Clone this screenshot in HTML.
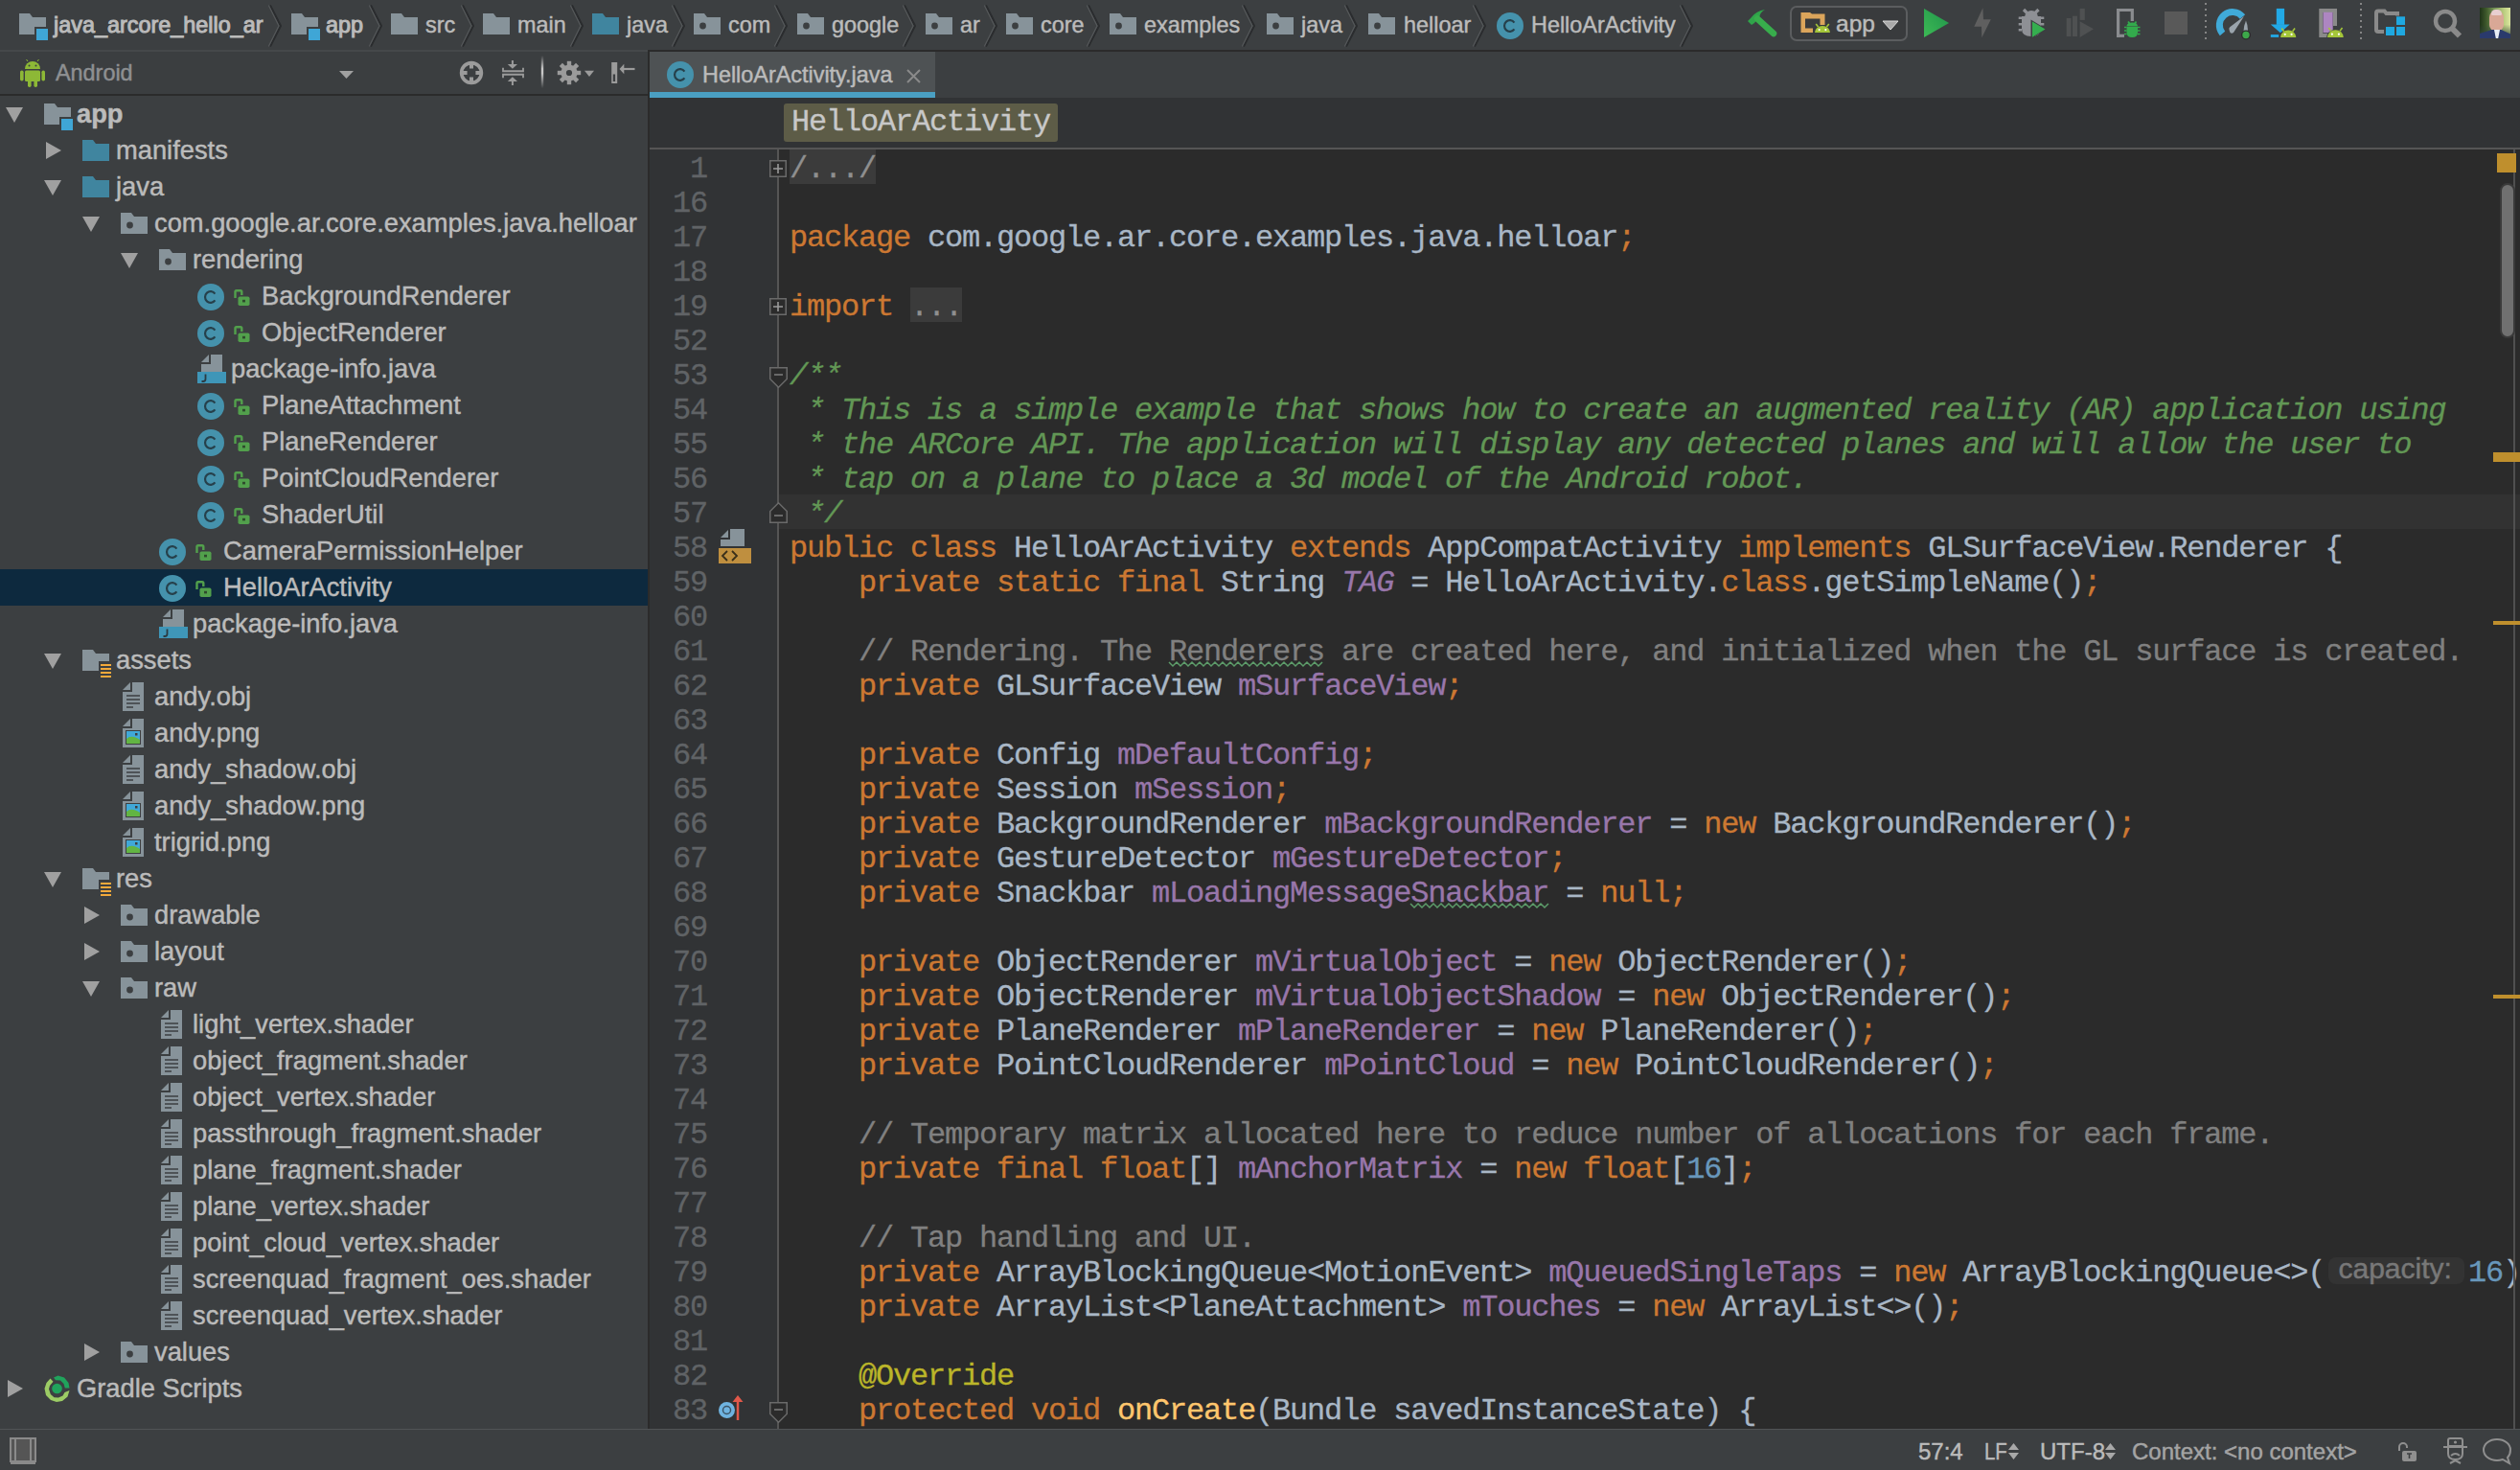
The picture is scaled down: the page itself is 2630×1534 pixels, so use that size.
<!DOCTYPE html><html><head><meta charset="utf-8"><style>
*{box-sizing:border-box}
html,body{margin:0;padding:0;width:2630px;height:1534px;overflow:hidden;background:#3c3f41;font-family:"Liberation Sans",sans-serif;}
.a{position:absolute}
.t{position:absolute;white-space:pre;color:#bbbbbb;line-height:1;-webkit-text-stroke:0.45px currentColor}
svg{position:absolute;overflow:visible}
.code{position:absolute;white-space:pre;font-family:"Liberation Mono",monospace;font-size:32px;letter-spacing:-1.2px;line-height:36px;color:#a9b7c6;margin-top:3px;-webkit-text-stroke:0.3px currentColor}
.k{color:#cc7832}.f{color:#9876aa}.n{color:#6897bb}.c{color:#808080}.d{color:#629755;font-style:italic}.an{color:#bbb529}.m{color:#ffc66d}
.ln{position:absolute;left:680px;width:58px;text-align:right;font-family:"Liberation Mono",monospace;font-size:32px;letter-spacing:-1.2px;line-height:36px;color:#606366;white-space:pre;margin-top:3px;-webkit-text-stroke:0.3px currentColor}
</style></head><body>
<svg width="0" height="0" style="position:absolute">
<defs>
<symbol id="fold" viewBox="0 0 28 22"><path d="M0 0H11L14 4H28V22H0Z" fill="#87939a"/></symbol>
<symbol id="pkg" viewBox="0 0 28 22"><path d="M0 0H11L14 4H28V22H0Z" fill="#87939a"/><circle cx="9.5" cy="13" r="3.4" fill="#3c3f41"/></symbol>
<symbol id="srcf" viewBox="0 0 28 22"><path d="M0 0H11L14 4H28V22H0Z" fill="#40859f"/></symbol>
<symbol id="mod" viewBox="0 0 30 28"><path d="M0 0H11L14 4H28V22H0Z" fill="#87939a"/><rect x="16" y="14" width="14" height="14" fill="#3c3f41"/><rect x="18" y="16" width="12" height="12" fill="#3fa6d6"/></symbol>
<symbol id="cls" viewBox="0 0 28 28"><circle cx="14" cy="14" r="14" fill="#4592ac"/><path d="M18.4 10.6A5.7 5.9 0 1 0 18.4 17.4" fill="none" stroke="#26404b" stroke-width="2.2"/></symbol>
<symbol id="lock" viewBox="0 0 17 17"><path d="M1.5 9V2.5Q1.5 1.2 2.8 1.2H7Q8.3 1.2 8.3 2.5V6" fill="none" stroke="#52a04c" stroke-width="2.4"/><rect x="4.5" y="7.5" width="12" height="9.5" rx="1.8" fill="#52a04c"/><rect x="9" y="10.8" width="3" height="2.6" fill="#2f4a2d"/></symbol>
<symbol id="file" viewBox="0 0 22 30"><path d="M0 8L8 0V8Z" fill="#87939a"/><path d="M10 0H22V30H0V10H10Z" fill="#87939a"/><path d="M4 14H18M4 18H18M4 22H18M4 26H11" stroke="#3c3f41" stroke-width="1.6"/></symbol>
<symbol id="img" viewBox="0 0 22 30"><path d="M0 8L8 0V8Z" fill="#87939a"/><path d="M10 0H22V30H0V10H10Z" fill="#87939a"/><rect x="3" y="12" width="16" height="15" fill="#3c3f41"/><rect x="4" y="13" width="14" height="13" fill="#40a8d8"/><path d="M4 26V21Q9 16 18 22V26Z" fill="#62b543"/><rect x="13" y="15" width="2.5" height="2.5" fill="#3c3f41"/></symbol>
<symbol id="jfile" viewBox="0 0 30 30"><path d="M4 8L12 0V8Z" fill="#87939a"/><path d="M14 0H26V18H4V10H14Z" fill="#87939a"/><rect x="0" y="18" width="30" height="12" fill="#3f96b8"/><path d="M8.5 20.5V25.5Q8.5 28 6 28H4.5" fill="none" stroke="#2b3a42" stroke-width="1.8"/></symbol>
<symbol id="resf" viewBox="0 0 30 30"><path d="M0 0H11L14 4H28V22H0Z" fill="#87939a"/><rect x="17" y="12" width="14" height="18" fill="#3c3f41"/><path d="M19 16H30M19 20H30M19 24H30M19 28H30" stroke="#f2a93b" stroke-width="2"/></symbol>
<symbol id="tri_d" viewBox="0 0 18 16"><path d="M0 0H18L9 16Z" fill="#a0a0a0"/></symbol>
<symbol id="tri_r" viewBox="0 0 16 18"><path d="M0 0L16 9L0 18Z" fill="#a0a0a0"/></symbol>
<symbol id="chev" viewBox="0 0 14 44"><path d="M2 0.5L13 22L2 43.5" fill="none" stroke="#2a2c2e" stroke-width="2"/><path d="M0.3 0.5L11 22L0.3 43.5" fill="none" stroke="#55585a" stroke-width="1.2"/></symbol>
<symbol id="droid" viewBox="0 0 26 30"><path d="M5 11A8 8 0 0 1 21 11Z" fill="#8db836"/><rect x="5" y="12.5" width="16" height="11.5" rx="1.5" fill="#8db836"/><rect x="0" y="12.5" width="3.6" height="11" rx="1.8" fill="#8db836"/><rect x="22.4" y="12.5" width="3.6" height="11" rx="1.8" fill="#8db836"/><rect x="8" y="22" width="3.6" height="8" rx="1.8" fill="#8db836"/><rect x="14.4" y="22" width="3.6" height="8" rx="1.8" fill="#8db836"/><path d="M8 3L6.5 1M18 3L19.5 1" stroke="#8db836" stroke-width="1"/><circle cx="9.5" cy="7.5" r="1" fill="#3c3f41"/><circle cx="16.5" cy="7.5" r="1" fill="#3c3f41"/></symbol>
</defs></svg>

<div class="a" style="left:0;top:0;width:2630px;height:52px;background:#3c3f41"></div>
<svg style="left:20px;top:14px" width="30" height="28"><use href="#mod"/></svg>
<div class="t" style="left:56px;top:15px;font-size:23.4px;-webkit-text-stroke:1px currentColor">java_arcore_hello_ar</div>
<svg style="left:280px;top:4.5px" width="14" height="44"><use href="#chev"/></svg>
<svg style="left:304px;top:14px" width="30" height="28"><use href="#mod"/></svg>
<div class="t" style="left:340px;top:15px;font-size:23.4px;-webkit-text-stroke:1px currentColor">app</div>
<svg style="left:385px;top:4.5px" width="14" height="44"><use href="#chev"/></svg>
<svg style="left:408px;top:14px" width="28" height="22"><use href="#fold"/></svg>
<div class="t" style="left:444px;top:15px;font-size:23.4px">src</div>
<svg style="left:481px;top:4.5px" width="14" height="44"><use href="#chev"/></svg>
<svg style="left:504px;top:14px" width="28" height="22"><use href="#fold"/></svg>
<div class="t" style="left:540px;top:15px;font-size:23.4px">main</div>
<svg style="left:595px;top:4.5px" width="14" height="44"><use href="#chev"/></svg>
<svg style="left:618px;top:14px" width="28" height="22"><use href="#srcf"/></svg>
<div class="t" style="left:654px;top:15px;font-size:23.4px">java</div>
<svg style="left:701px;top:4.5px" width="14" height="44"><use href="#chev"/></svg>
<svg style="left:724px;top:14px" width="28" height="22"><use href="#pkg"/></svg>
<div class="t" style="left:760px;top:15px;font-size:23.4px">com</div>
<svg style="left:808px;top:4.5px" width="14" height="44"><use href="#chev"/></svg>
<svg style="left:832px;top:14px" width="28" height="22"><use href="#pkg"/></svg>
<div class="t" style="left:868px;top:15px;font-size:23.4px">google</div>
<svg style="left:942px;top:4.5px" width="14" height="44"><use href="#chev"/></svg>
<svg style="left:966px;top:14px" width="28" height="22"><use href="#pkg"/></svg>
<div class="t" style="left:1002px;top:15px;font-size:23.4px">ar</div>
<svg style="left:1027px;top:4.5px" width="14" height="44"><use href="#chev"/></svg>
<svg style="left:1050px;top:14px" width="28" height="22"><use href="#pkg"/></svg>
<div class="t" style="left:1086px;top:15px;font-size:23.4px">core</div>
<svg style="left:1134px;top:4.5px" width="14" height="44"><use href="#chev"/></svg>
<svg style="left:1158px;top:14px" width="28" height="22"><use href="#pkg"/></svg>
<div class="t" style="left:1194px;top:15px;font-size:23.4px">examples</div>
<svg style="left:1296px;top:4.5px" width="14" height="44"><use href="#chev"/></svg>
<svg style="left:1322px;top:14px" width="28" height="22"><use href="#pkg"/></svg>
<div class="t" style="left:1358px;top:15px;font-size:23.4px">java</div>
<svg style="left:1403px;top:4.5px" width="14" height="44"><use href="#chev"/></svg>
<svg style="left:1428px;top:14px" width="28" height="22"><use href="#pkg"/></svg>
<div class="t" style="left:1465px;top:15px;font-size:23.4px">helloar</div>
<svg style="left:1537px;top:4.5px" width="14" height="44"><use href="#chev"/></svg>
<svg style="left:1562px;top:13px" width="28" height="28"><use href="#cls"/></svg>
<div class="t" style="left:1598px;top:15px;font-size:23.4px">HelloArActivity</div>
<svg style="left:1753px;top:4.5px" width="14" height="44"><use href="#chev"/></svg>
<svg style="left:1823px;top:9px" width="32" height="30" viewBox="0 0 32 30"><path d="M1 13L4.5 9.5Q10 2 19 1Q14 4 13.5 8L8 15L5 17Z" fill="#2fa44a"/><path d="M11 10.5L28 26" stroke="#38ad4c" stroke-width="6.5" stroke-linecap="round"/></svg>
<div class="a" style="left:1868px;top:6px;width:123px;height:37px;border:2.5px solid #5b5d5f;border-radius:7px;background:#393b3d"></div>
<svg style="left:1879px;top:12px" width="32" height="23" viewBox="0 0 32 23"><path d="M0.5 1H10L12 2.5H25.5V14H20.5V7.5H5V17.5H13V22H0.5Z" fill="#dba55b"/><path d="M14 22.5A9.0 8.02 0 0 1 32 22.5Z" fill="#393b3d"/><path d="M15 22A8.0 7.0200000000000005 0 0 1 31 22Z" fill="#a4c639"/><path d="M18.6 16.033L16.2 13M27.4 16.033L29.8 13" stroke="#a4c639" stroke-width="1.6"/><circle cx="19.64" cy="19.0516" r="1.1" fill="#fff"/><circle cx="26.36" cy="19.0516" r="1.1" fill="#fff"/></svg>
<div class="t" style="left:1916px;top:13px;font-size:24.5px;color:#bbbbbb">app</div>
<svg style="left:1964px;top:21px" width="18" height="11" viewBox="0 0 18 11"><path d="M1 1H17L9 10Z" fill="#a9a9a9" stroke="#d8d8d8" stroke-width="1"/></svg>
<svg style="left:2008px;top:9px" width="26" height="30" viewBox="0 0 26 30"><defs><linearGradient id="rg" x1="0" y1="1" x2="1" y2="0"><stop offset="0" stop-color="#3dba55"/><stop offset="1" stop-color="#1f934a"/></linearGradient></defs><path d="M0 0L26 15L0 30Z" fill="url(#rg)"/></svg>
<svg style="left:2060px;top:8px" width="18" height="32" viewBox="0 0 18 32"><path d="M9.4 0.3L0.3 19.8H8L8.3 31.3L17.8 12.2H10Z" fill="#5f5f5f"/></svg>
<svg style="left:2106px;top:8px" width="30" height="33" viewBox="0 0 30 33"><path d="M6 2L9.5 5.5M21.5 2L18 5.5" stroke="#8e9095" stroke-width="3.2"/><path d="M7 10A7 7 0 0 1 21 10Z" fill="#8e9095"/><path d="M4 9H24V22Q24 30 14 30Q4 30 4 22Z" fill="#8e9095"/><path d="M0.7 9.5H4V12H0.7ZM0.7 16H4V18.5H0.7ZM0.7 22H4V24.5H0.7ZM24 9.5H27.3V12H24ZM24 16H27.3V18.5H24Z" fill="#8e9095"/><path d="M13.5 12.5L30 22.5L13.5 32.5Z" fill="#3c3f41"/><path d="M15 14.5L28.5 22.5L15 30.8Z" fill="#35ae4f"/></svg>
<svg style="left:2156px;top:8px" width="30" height="32" viewBox="0 0 30 32"><rect x="0.7" y="11" width="4.8" height="19" fill="#4f5152"/><rect x="7" y="8.7" width="5" height="21.3" fill="#4f5152"/><rect x="14.6" y="0.9" width="5.2" height="12" fill="#4f5152"/><path d="M14.6 14.2L29 22.2L14.6 30.9Z" fill="#4f5152"/></svg>
<svg style="left:2208px;top:8px" width="27" height="32" viewBox="0 0 27 32"><path d="M2.6 30.9V2.5H17.3V14" fill="none" stroke="#8a8c8f" stroke-width="3.2"/><path d="M2.6 29.3H9" stroke="#8a8c8f" stroke-width="3.2"/><path d="M13 14.5L14.5 16.5M21.5 14.5L20 16.5" stroke="#33ab4c" stroke-width="1.8"/><path d="M11.5 19A5.8 4 0 0 1 23 19Z" fill="#33ab4c"/><path d="M11.5 19.5H23V26Q23 31 17.25 31Q11.5 31 11.5 26Z" fill="#33ab4c"/><path d="M9 20.5H11.5M9 24H11.5M9 27.5H11.5M23 20.5H25.5M23 24H25.5M23 27.5H25.5" stroke="#33ab4c" stroke-width="1.6"/></svg>
<div class="a" style="left:2259px;top:12px;width:24px;height:24px;background:#595959"></div>
<div class="a" style="left:2301px;top:3px;width:2px;height:39px;background:repeating-linear-gradient(#858585 0 2px,transparent 2px 6px)"></div>
<div class="a" style="left:2463px;top:3px;width:2px;height:39px;background:repeating-linear-gradient(#858585 0 2px,transparent 2px 6px)"></div>
<svg style="left:2315px;top:12px" width="36" height="30" viewBox="0 0 36 30"><path d="M4.5 23A12.5 12.5 0 0 1 25.5 5.5" fill="none" stroke="#40aad8" stroke-width="7"/><path d="M11.5 19Q11 17 12.5 16L27 5L16 22Q14 23.5 12.5 22Z" fill="#9aa4ac"/><path d="M29 9.5Q31 14 31 20Q31 24 28.5 24Q26.5 24 26.5 21Q26.5 15 29 9.5Z" fill="#9aa4ac"/><circle cx="29" cy="24.5" r="5" fill="#2b2b2b"/><circle cx="29" cy="24.5" r="3.7" fill="#3da84a"/></svg>
<svg style="left:2369px;top:8px" width="28" height="32" viewBox="0 0 28 32"><rect x="6.8" y="0.9" width="8.3" height="17" fill="#22a9e6"/><path d="M0.8 17.4H20.7L10.9 26.2Z" fill="#22a9e6"/><rect x="0.8" y="28.1" width="8.4" height="2.8" fill="#22a9e6"/><path d="M10 31.5A9.15 8.41 0 0 1 28.3 31.5Z" fill="#3c3f41"/><path d="M11 31.0A8.15 7.41 0 0 1 27.3 31.0Z" fill="#a4c639"/><path d="M14.667499999999997 24.7015L12.222499999999998 21.5M23.6325 24.7015L26.0775 21.5" stroke="#a4c639" stroke-width="1.6"/><circle cx="15.726999999999999" cy="27.8878" r="1.1" fill="#fff"/><circle cx="22.573" cy="27.8878" r="1.1" fill="#fff"/></svg>
<svg style="left:2419px;top:8px" width="28" height="32" viewBox="0 0 28 32"><path d="M3.3 31V2.9H18V19" fill="none" stroke="#8a8a8a" stroke-width="4"/><path d="M3.3 29H10" stroke="#8a8a8a" stroke-width="4"/><rect x="5.5" y="4.8" width="10.2" height="21.4" fill="#ad86c1"/><path d="M9 31.5A9.4 8.8 0 0 1 27.8 31.5Z" fill="#3c3f41"/><path d="M10 31A8.4 7.800000000000001 0 0 1 26.8 31Z" fill="#a4c639"/><path d="M13.779999999999998 24.369999999999997L11.259999999999998 21M23.02 24.369999999999997L25.54 21" stroke="#a4c639" stroke-width="1.6"/><circle cx="14.871999999999998" cy="27.724" r="1.1" fill="#fff"/><circle cx="21.927999999999997" cy="27.724" r="1.1" fill="#fff"/></svg>
<svg style="left:2477px;top:10px" width="34" height="28" viewBox="0 0 34 28"><path d="M3 21V3.5Q3 1.5 5 1.5H11.5L13.5 4H25V7" fill="none" stroke="#8a8a8a" stroke-width="4"/><path d="M3 21Q3 23 5 23H11" fill="none" stroke="#8a8a8a" stroke-width="4"/><rect x="12" y="16.5" width="11" height="11" fill="#3c3f41"/><rect x="13" y="18" width="9" height="9" fill="#1fa8e0"/><rect x="23" y="6.5" width="11" height="21" fill="#3c3f41"/><rect x="24" y="7.3" width="9" height="8.7" fill="#1fa8e0"/><rect x="24" y="18" width="9" height="9" fill="#1fa8e0"/></svg>
<svg style="left:2538px;top:8px" width="34" height="34" viewBox="0 0 34 34"><circle cx="14" cy="13.9" r="10" fill="none" stroke="#8a8a8a" stroke-width="4.5"/><path d="M20.5 21L29 29.5" stroke="#8a8a8a" stroke-width="6"/></svg>
<div class="a" style="left:2588px;top:8px;width:32px;height:32px;overflow:hidden;background:linear-gradient(90deg,#1f3318 0%,#3f5a2c 22%,#7e9a5c 50%,#b9cc7e 78%,#dce6a0 100%)"><div class="a" style="left:0;top:0;width:32px;height:32px;background:linear-gradient(#00000000 55%,#33443a 100%)"></div><div class="a" style="left:10px;top:3px;width:15px;height:21px;border-radius:7px 7px 6px 6px;background:#d9a896"></div><div class="a" style="left:12px;top:2px;width:11px;height:6px;border-radius:6px 6px 2px 2px;background:#e8cfd0"></div><div class="a" style="left:0;top:23px;width:32px;height:9px;background:#2a3a6c;clip-path:polygon(0 45%,40% 0,70% 0,100% 50%,100% 100%,0 100%)"></div><div class="a" style="left:15px;top:23px;width:6px;height:9px;background:#e8eef5;clip-path:polygon(0 0,100% 0,70% 100%,30% 100%)"></div></div>
<div class="a" style="left:0;top:54px;width:676px;height:44px;background:#3b3e40"></div>
<div class="a" style="left:0;top:98px;width:676px;height:2px;background:#2b2b2b"></div>
<svg style="left:21px;top:61px" width="26" height="30"><use href="#droid"/></svg>
<div class="t" style="left:58px;top:64.5px;font-size:23.4px;color:#8e9092">Android</div>
<svg style="left:354px;top:74px" width="15" height="8" viewBox="0 0 15 8"><path d="M0 0H15L7.5 8Z" fill="#a0a0a0"/></svg>
<svg style="left:479px;top:63px" width="26" height="26" viewBox="0 0 26 26"><circle cx="13" cy="13" r="10.4" fill="none" stroke="#9b9b9b" stroke-width="3.6"/><path d="M13 2V8.6M13 17.4V24M2 13H8.6M17.4 13H24" stroke="#9b9b9b" stroke-width="4"/></svg>
<svg style="left:524px;top:62px" width="23" height="28" viewBox="0 0 23 28"><path d="M1 8.8V12.25H22V8.8M1 19.3V15.75H22V19.3" fill="none" stroke="#9b9b9b" stroke-width="1.8"/><path d="M10.9 1V6" stroke="#9b9b9b" stroke-width="2"/><path d="M5.8 5H16L10.9 9.7Z" fill="#9b9b9b"/><path d="M10.9 22V27" stroke="#9b9b9b" stroke-width="2"/><path d="M5.8 23H16L10.9 18.3Z" fill="#9b9b9b"/></svg>
<div class="a" style="left:564px;top:58px;width:4px;height:34px;background:linear-gradient(#3c3f41,#c8c8c8 40%,#c8c8c8 55%,#3c3f41);clip-path:inset(0 0.8px)"></div>
<svg style="left:581px;top:63px" width="40" height="26" viewBox="0 0 40 26"><g transform="translate(13 13)"><circle r="8.6" fill="#9b9b9b"/><g fill="#9b9b9b"><rect x="-2.2" y="-12.2" width="4.4" height="24.4"/><rect x="-2.2" y="-12.2" width="4.4" height="24.4" transform="rotate(45)"/><rect x="-2.2" y="-12.2" width="4.4" height="24.4" transform="rotate(90)"/><rect x="-2.2" y="-12.2" width="4.4" height="24.4" transform="rotate(135)"/></g><circle r="3.1" fill="#3c3f41"/></g><path d="M29 10.8H39L34 17Z" fill="#9b9b9b"/></svg>
<svg style="left:637px;top:64px" width="27" height="24" viewBox="0 0 27 24"><rect x="1.2" y="1" width="6" height="22" fill="#9b9b9b"/><rect x="2.8" y="13.5" width="2.3" height="7.5" fill="#3c3f41"/><path d="M13 8H25.5" stroke="#9b9b9b" stroke-width="2.2"/><path d="M9.5 8L14.3 2.8V13.2Z" fill="#9b9b9b"/></svg>
<svg style="left:6px;top:112px" width="18" height="16"><use href="#tri_d"/></svg>
<svg style="left:46px;top:108px" width="30" height="28"><use href="#mod"/></svg>
<div class="t" style="left:80px;top:104.5px;font-size:27.3px;font-weight:700">app</div>
<svg style="left:48px;top:148px" width="16" height="18"><use href="#tri_r"/></svg>
<svg style="left:86px;top:146px" width="28" height="22"><use href="#srcf"/></svg>
<div class="t" style="left:121px;top:142.5px;font-size:27.3px;font-weight:400">manifests</div>
<svg style="left:46px;top:188px" width="18" height="16"><use href="#tri_d"/></svg>
<svg style="left:86px;top:184px" width="28" height="22"><use href="#srcf"/></svg>
<div class="t" style="left:121px;top:180.5px;font-size:27.3px;font-weight:400">java</div>
<svg style="left:86px;top:226px" width="18" height="16"><use href="#tri_d"/></svg>
<svg style="left:126px;top:222px" width="28" height="22"><use href="#pkg"/></svg>
<div class="t" style="left:161px;top:218.5px;font-size:27.3px;font-weight:400">com.google.ar.core.examples.java.helloar</div>
<svg style="left:126px;top:264px" width="18" height="16"><use href="#tri_d"/></svg>
<svg style="left:166px;top:260px" width="28" height="22"><use href="#pkg"/></svg>
<div class="t" style="left:201px;top:256.5px;font-size:27.3px;font-weight:400">rendering</div>
<svg style="left:206px;top:296px" width="28" height="28"><use href="#cls"/></svg>
<svg style="left:244px;top:301.5px" width="17" height="17"><use href="#lock"/></svg>
<div class="t" style="left:273px;top:294.5px;font-size:27.3px;font-weight:400">BackgroundRenderer</div>
<svg style="left:206px;top:334px" width="28" height="28"><use href="#cls"/></svg>
<svg style="left:244px;top:339.5px" width="17" height="17"><use href="#lock"/></svg>
<div class="t" style="left:273px;top:332.5px;font-size:27.3px;font-weight:400">ObjectRenderer</div>
<svg style="left:206px;top:370px" width="30" height="30"><use href="#jfile"/></svg>
<div class="t" style="left:241px;top:370.5px;font-size:27.3px;font-weight:400">package-info.java</div>
<svg style="left:206px;top:410px" width="28" height="28"><use href="#cls"/></svg>
<svg style="left:244px;top:415.5px" width="17" height="17"><use href="#lock"/></svg>
<div class="t" style="left:273px;top:408.5px;font-size:27.3px;font-weight:400">PlaneAttachment</div>
<svg style="left:206px;top:448px" width="28" height="28"><use href="#cls"/></svg>
<svg style="left:244px;top:453.5px" width="17" height="17"><use href="#lock"/></svg>
<div class="t" style="left:273px;top:446.5px;font-size:27.3px;font-weight:400">PlaneRenderer</div>
<svg style="left:206px;top:486px" width="28" height="28"><use href="#cls"/></svg>
<svg style="left:244px;top:491.5px" width="17" height="17"><use href="#lock"/></svg>
<div class="t" style="left:273px;top:484.5px;font-size:27.3px;font-weight:400">PointCloudRenderer</div>
<svg style="left:206px;top:524px" width="28" height="28"><use href="#cls"/></svg>
<svg style="left:244px;top:529.5px" width="17" height="17"><use href="#lock"/></svg>
<div class="t" style="left:273px;top:522.5px;font-size:27.3px;font-weight:400">ShaderUtil</div>
<svg style="left:166px;top:562px" width="28" height="28"><use href="#cls"/></svg>
<svg style="left:204px;top:567.5px" width="17" height="17"><use href="#lock"/></svg>
<div class="t" style="left:233px;top:560.5px;font-size:27.3px;font-weight:400">CameraPermissionHelper</div>
<div class="a" style="left:0;top:594px;width:676px;height:38px;background:#0d293e"></div>
<svg style="left:166px;top:600px" width="28" height="28"><use href="#cls"/></svg>
<svg style="left:204px;top:605.5px" width="17" height="17"><use href="#lock"/></svg>
<div class="t" style="left:233px;top:598.5px;font-size:27.3px;font-weight:400">HelloArActivity</div>
<svg style="left:166px;top:636px" width="30" height="30"><use href="#jfile"/></svg>
<div class="t" style="left:201px;top:636.5px;font-size:27.3px;font-weight:400">package-info.java</div>
<svg style="left:46px;top:682px" width="18" height="16"><use href="#tri_d"/></svg>
<svg style="left:86px;top:678px" width="30" height="30"><use href="#resf"/></svg>
<div class="t" style="left:121px;top:674.5px;font-size:27.3px;font-weight:400">assets</div>
<svg style="left:128px;top:712px" width="22" height="30"><use href="#file"/></svg>
<div class="t" style="left:161px;top:712.5px;font-size:27.3px;font-weight:400">andy.obj</div>
<svg style="left:128px;top:750px" width="22" height="30"><use href="#img"/></svg>
<div class="t" style="left:161px;top:750.5px;font-size:27.3px;font-weight:400">andy.png</div>
<svg style="left:128px;top:788px" width="22" height="30"><use href="#file"/></svg>
<div class="t" style="left:161px;top:788.5px;font-size:27.3px;font-weight:400">andy_shadow.obj</div>
<svg style="left:128px;top:826px" width="22" height="30"><use href="#img"/></svg>
<div class="t" style="left:161px;top:826.5px;font-size:27.3px;font-weight:400">andy_shadow.png</div>
<svg style="left:128px;top:864px" width="22" height="30"><use href="#img"/></svg>
<div class="t" style="left:161px;top:864.5px;font-size:27.3px;font-weight:400">trigrid.png</div>
<svg style="left:46px;top:910px" width="18" height="16"><use href="#tri_d"/></svg>
<svg style="left:86px;top:906px" width="30" height="30"><use href="#resf"/></svg>
<div class="t" style="left:121px;top:902.5px;font-size:27.3px;font-weight:400">res</div>
<svg style="left:88px;top:946px" width="16" height="18"><use href="#tri_r"/></svg>
<svg style="left:126px;top:944px" width="28" height="22"><use href="#pkg"/></svg>
<div class="t" style="left:161px;top:940.5px;font-size:27.3px;font-weight:400">drawable</div>
<svg style="left:88px;top:984px" width="16" height="18"><use href="#tri_r"/></svg>
<svg style="left:126px;top:982px" width="28" height="22"><use href="#pkg"/></svg>
<div class="t" style="left:161px;top:978.5px;font-size:27.3px;font-weight:400">layout</div>
<svg style="left:86px;top:1024px" width="18" height="16"><use href="#tri_d"/></svg>
<svg style="left:126px;top:1020px" width="28" height="22"><use href="#pkg"/></svg>
<div class="t" style="left:161px;top:1016.5px;font-size:27.3px;font-weight:400">raw</div>
<svg style="left:168px;top:1054px" width="22" height="30"><use href="#file"/></svg>
<div class="t" style="left:201px;top:1054.5px;font-size:27.3px;font-weight:400">light_vertex.shader</div>
<svg style="left:168px;top:1092px" width="22" height="30"><use href="#file"/></svg>
<div class="t" style="left:201px;top:1092.5px;font-size:27.3px;font-weight:400">object_fragment.shader</div>
<svg style="left:168px;top:1130px" width="22" height="30"><use href="#file"/></svg>
<div class="t" style="left:201px;top:1130.5px;font-size:27.3px;font-weight:400">object_vertex.shader</div>
<svg style="left:168px;top:1168px" width="22" height="30"><use href="#file"/></svg>
<div class="t" style="left:201px;top:1168.5px;font-size:27.3px;font-weight:400">passthrough_fragment.shader</div>
<svg style="left:168px;top:1206px" width="22" height="30"><use href="#file"/></svg>
<div class="t" style="left:201px;top:1206.5px;font-size:27.3px;font-weight:400">plane_fragment.shader</div>
<svg style="left:168px;top:1244px" width="22" height="30"><use href="#file"/></svg>
<div class="t" style="left:201px;top:1244.5px;font-size:27.3px;font-weight:400">plane_vertex.shader</div>
<svg style="left:168px;top:1282px" width="22" height="30"><use href="#file"/></svg>
<div class="t" style="left:201px;top:1282.5px;font-size:27.3px;font-weight:400">point_cloud_vertex.shader</div>
<svg style="left:168px;top:1320px" width="22" height="30"><use href="#file"/></svg>
<div class="t" style="left:201px;top:1320.5px;font-size:27.3px;font-weight:400">screenquad_fragment_oes.shader</div>
<svg style="left:168px;top:1358px" width="22" height="30"><use href="#file"/></svg>
<div class="t" style="left:201px;top:1358.5px;font-size:27.3px;font-weight:400">screenquad_vertex.shader</div>
<svg style="left:88px;top:1402px" width="16" height="18"><use href="#tri_r"/></svg>
<svg style="left:126px;top:1400px" width="28" height="22"><use href="#pkg"/></svg>
<div class="t" style="left:161px;top:1396.5px;font-size:27.3px;font-weight:400">values</div>
<svg style="left:8px;top:1440px" width="16" height="18"><use href="#tri_r"/></svg>
<svg style="left:44px;top:1434px" width="30" height="30" viewBox="0 0 30 30"><path d="M12 3.5L16.5 1.5L23 3.5L27.5 9L28.5 14.5H23.8L22.5 10L19 6.5L14 6.2Z" fill="#20a35c"/><path d="M28.5 17L26.5 23.5L21 28L15 29L9 27L4 22L2.5 15L4.5 9L8.5 4.5L11.5 7.8L8 12L7 15.5L8.8 21L12.5 24.2L17 24.5L21.5 22.5L23.5 19Z" fill="#9ccc65"/><circle cx="15.5" cy="15" r="5.3" fill="#20a35c"/></svg>
<div class="t" style="left:80px;top:1434.5px;font-size:27.3px;font-weight:400">Gradle Scripts</div>
<div class="a" style="left:676px;top:53px;width:2px;height:1439px;background:#2b2b2b"></div>
<div class="a" style="left:678px;top:53px;width:1952px;height:48px;background:#3c3f41"></div>
<div class="a" style="left:678px;top:54px;width:298px;height:42px;background:#4e5254"></div>
<div class="a" style="left:676px;top:52px;width:1954px;height:2px;background:#2b2b2b"></div>
<div class="a" style="left:0;top:52px;width:676px;height:2px;background:#45484a"></div>
<div class="a" style="left:678px;top:96px;width:298px;height:6px;background:#4a9fc2"></div>
<svg style="left:696px;top:64px" width="28" height="28"><use href="#cls"/></svg>
<div class="t" style="left:733px;top:67px;font-size:23.4px">HelloArActivity.java</div>
<svg style="left:946px;top:72px" width="15" height="15" viewBox="0 0 15 15"><path d="M1 1L14 14M14 1L1 14" stroke="#8a8a8a" stroke-width="2"/></svg>
<div class="a" style="left:678px;top:102px;width:1952px;height:53px;background:#313335"></div>
<div class="a" style="left:678px;top:154px;width:1952px;height:2px;background:#555555"></div>
<div class="a" style="left:818px;top:108px;width:286px;height:40px;background:#5d5c47;border-radius:3px"></div>
<div class="code" style="left:826px;top:107px;color:#c8c8c8">HelloArActivity</div>
<div class="a" style="left:678px;top:156px;width:135px;height:1336px;background:#313335"></div>
<div class="a" style="left:813px;top:156px;width:1817px;height:1336px;background:#2b2b2b"></div>
<div class="a" style="left:813px;top:516px;width:1817px;height:36px;background:#323232"></div>
<div class="a" style="left:811px;top:156px;width:2px;height:1336px;background:#555555"></div>
<div class="a" style="left:824px;top:156px;width:90px;height:36px;background:#3b3b3b"></div>
<div class="a" style="left:950px;top:300px;width:54px;height:36px;background:#3b3b3b"></div>
<div class="ln" style="top:156px">1</div>
<div class="code" style="left:824px;top:156px"><span style="color:#8f8f8f">/.../</span></div>
<div class="ln" style="top:192px">16</div>
<div class="code" style="left:824px;top:192px"></div>
<div class="ln" style="top:228px">17</div>
<div class="code" style="left:824px;top:228px"><span class="k">package</span> com.google.ar.core.examples.java.helloar<span class="k">;</span></div>
<div class="ln" style="top:264px">18</div>
<div class="code" style="left:824px;top:264px"></div>
<div class="ln" style="top:300px">19</div>
<div class="code" style="left:824px;top:300px"><span class="k">import</span> <span style="color:#8f8f8f">...</span></div>
<div class="ln" style="top:336px">52</div>
<div class="code" style="left:824px;top:336px"></div>
<div class="ln" style="top:372px">53</div>
<div class="code" style="left:824px;top:372px"><span class="d">/**</span></div>
<div class="ln" style="top:408px">54</div>
<div class="code" style="left:824px;top:408px"><span class="d"> * This is a simple example that shows how to create an augmented reality (AR) application using</span></div>
<div class="ln" style="top:444px">55</div>
<div class="code" style="left:824px;top:444px"><span class="d"> * the ARCore API. The application will display any detected planes and will allow the user to</span></div>
<div class="ln" style="top:480px">56</div>
<div class="code" style="left:824px;top:480px"><span class="d"> * tap on a plane to place a 3d model of the Android robot.</span></div>
<div class="ln" style="top:516px">57</div>
<div class="code" style="left:824px;top:516px"><span class="d"> */</span></div>
<div class="ln" style="top:552px">58</div>
<div class="code" style="left:824px;top:552px"><span class="k">public class</span> HelloArActivity <span class="k">extends</span> AppCompatActivity <span class="k">implements</span> GLSurfaceView.Renderer {</div>
<div class="ln" style="top:588px">59</div>
<div class="code" style="left:824px;top:588px">    <span class="k">private static final</span> String <span class="f" style="font-style:italic">TAG</span> = HelloArActivity.<span class="k">class</span>.getSimpleName()<span class="k">;</span></div>
<div class="ln" style="top:624px">60</div>
<div class="code" style="left:824px;top:624px"></div>
<div class="ln" style="top:660px">61</div>
<div class="code" style="left:824px;top:660px"><span class="c">    // Rendering. The Renderers are created here, and initialized when the GL surface is created.</span></div>
<div class="ln" style="top:696px">62</div>
<div class="code" style="left:824px;top:696px">    <span class="k">private</span> GLSurfaceView <span class="f">mSurfaceView</span><span class="k">;</span></div>
<div class="ln" style="top:732px">63</div>
<div class="code" style="left:824px;top:732px"></div>
<div class="ln" style="top:768px">64</div>
<div class="code" style="left:824px;top:768px">    <span class="k">private</span> Config <span class="f">mDefaultConfig</span><span class="k">;</span></div>
<div class="ln" style="top:804px">65</div>
<div class="code" style="left:824px;top:804px">    <span class="k">private</span> Session <span class="f">mSession</span><span class="k">;</span></div>
<div class="ln" style="top:840px">66</div>
<div class="code" style="left:824px;top:840px">    <span class="k">private</span> BackgroundRenderer <span class="f">mBackgroundRenderer</span> = <span class="k">new</span> BackgroundRenderer()<span class="k">;</span></div>
<div class="ln" style="top:876px">67</div>
<div class="code" style="left:824px;top:876px">    <span class="k">private</span> GestureDetector <span class="f">mGestureDetector</span><span class="k">;</span></div>
<div class="ln" style="top:912px">68</div>
<div class="code" style="left:824px;top:912px">    <span class="k">private</span> Snackbar <span class="f">mLoadingMessageSnackbar</span> = <span class="k">null;</span></div>
<div class="ln" style="top:948px">69</div>
<div class="code" style="left:824px;top:948px"></div>
<div class="ln" style="top:984px">70</div>
<div class="code" style="left:824px;top:984px">    <span class="k">private</span> ObjectRenderer <span class="f">mVirtualObject</span> = <span class="k">new</span> ObjectRenderer()<span class="k">;</span></div>
<div class="ln" style="top:1020px">71</div>
<div class="code" style="left:824px;top:1020px">    <span class="k">private</span> ObjectRenderer <span class="f">mVirtualObjectShadow</span> = <span class="k">new</span> ObjectRenderer()<span class="k">;</span></div>
<div class="ln" style="top:1056px">72</div>
<div class="code" style="left:824px;top:1056px">    <span class="k">private</span> PlaneRenderer <span class="f">mPlaneRenderer</span> = <span class="k">new</span> PlaneRenderer()<span class="k">;</span></div>
<div class="ln" style="top:1092px">73</div>
<div class="code" style="left:824px;top:1092px">    <span class="k">private</span> PointCloudRenderer <span class="f">mPointCloud</span> = <span class="k">new</span> PointCloudRenderer()<span class="k">;</span></div>
<div class="ln" style="top:1128px">74</div>
<div class="code" style="left:824px;top:1128px"></div>
<div class="ln" style="top:1164px">75</div>
<div class="code" style="left:824px;top:1164px"><span class="c">    // Temporary matrix allocated here to reduce number of allocations for each frame.</span></div>
<div class="ln" style="top:1200px">76</div>
<div class="code" style="left:824px;top:1200px">    <span class="k">private final float</span>[] <span class="f">mAnchorMatrix</span> = <span class="k">new float</span>[<span class="n">16</span>]<span class="k">;</span></div>
<div class="ln" style="top:1236px">77</div>
<div class="code" style="left:824px;top:1236px"></div>
<div class="ln" style="top:1272px">78</div>
<div class="code" style="left:824px;top:1272px"><span class="c">    // Tap handling and UI.</span></div>
<div class="ln" style="top:1308px">79</div>
<div class="a" style="left:2430px;top:1311.7px;width:141.5px;height:28px;border-radius:8px;background:#333333"></div>
<div class="t" style="left:2440.5px;top:1308.8px;font-size:30px;color:#787878">capacity:</div>
<div class="code" style="left:2576px;top:1308px"><span class="n">16</span>)</div>
<div class="code" style="left:824px;top:1308px">    <span class="k">private</span> ArrayBlockingQueue&lt;MotionEvent&gt; <span class="f">mQueuedSingleTaps</span> = <span class="k">new</span> ArrayBlockingQueue&lt;&gt;(</div>
<div class="ln" style="top:1344px">80</div>
<div class="code" style="left:824px;top:1344px">    <span class="k">private</span> ArrayList&lt;PlaneAttachment&gt; <span class="f">mTouches</span> = <span class="k">new</span> ArrayList&lt;&gt;()<span class="k">;</span></div>
<div class="ln" style="top:1380px">81</div>
<div class="code" style="left:824px;top:1380px"></div>
<div class="ln" style="top:1416px">82</div>
<div class="code" style="left:824px;top:1416px">    <span class="an">@Override</span></div>
<div class="ln" style="top:1452px">83</div>
<div class="code" style="left:824px;top:1452px">    <span class="k">protected void</span> <span class="m">onCreate</span>(Bundle savedInstanceState) {</div>
<div class="ln" style="top:1488px">84</div>
<div class="code" style="left:824px;top:1488px">        <span class="k">super</span>.onCreate(savedInstanceState)<span class="k">;</span></div>
<div class="a" style="left:2623px;top:156px;width:2px;height:1336px;background:#505050"></div>
<div class="a" style="left:2606px;top:160px;width:20px;height:20px;background:#bf8f2d"></div>
<div class="a" style="left:2609px;top:191px;width:16px;height:162px;border-radius:8px;background:#707070;border:2px solid #3a3a3a"></div>
<div class="a" style="left:2602px;top:472px;width:28px;height:10px;background:#bf8f2d"></div>
<div class="a" style="left:2602px;top:648px;width:28px;height:4px;background:#bf8f2d"></div>
<div class="a" style="left:2602px;top:1038px;width:28px;height:4px;background:#bf8f2d"></div>
<svg style="left:803px;top:167px" width="18" height="18" viewBox="0 0 18 18"><rect x="0.75" y="0.75" width="16.5" height="16.5" fill="#2b2b2b" stroke="#6a6a6a" stroke-width="1.5"/><path d="M4 9H14M9 4V14" stroke="#9a9a9a" stroke-width="1.6"/></svg>
<svg style="left:803px;top:311px" width="18" height="18" viewBox="0 0 18 18"><rect x="0.75" y="0.75" width="16.5" height="16.5" fill="#2b2b2b" stroke="#6a6a6a" stroke-width="1.5"/><path d="M4 9H14M9 4V14" stroke="#9a9a9a" stroke-width="1.6"/></svg>
<svg style="left:803px;top:383px" width="19" height="22" viewBox="0 0 19 22"><path d="M0.75 0.75H18.25V12.5L9.5 21.25L0.75 12.5Z" fill="#2b2b2b" stroke="#6a6a6a" stroke-width="1.5"/><path d="M5 8H14" stroke="#7a7a7a" stroke-width="1.6"/></svg>
<svg style="left:803px;top:524px" width="19" height="22" viewBox="0 0 19 22"><path d="M0.75 21.25H18.25V9.5L9.5 0.75L0.75 9.5Z" fill="#2b2b2b" stroke="#6a6a6a" stroke-width="1.5"/><path d="M5 14H14" stroke="#7a7a7a" stroke-width="1.6"/></svg>
<svg style="left:803px;top:1463px" width="19" height="22" viewBox="0 0 19 22"><path d="M0.75 0.75H18.25V12.5L9.5 21.25L0.75 12.5Z" fill="#2b2b2b" stroke="#6a6a6a" stroke-width="1.5"/><path d="M5 8H14" stroke="#7a7a7a" stroke-width="1.6"/></svg>
<svg style="left:750px;top:552px" width="34" height="37" viewBox="0 0 34 37"><path d="M2 9L10 1V9Z" fill="#87939a"/><path d="M12 0H27V18H2V11H12Z" fill="#87939a"/><rect x="0" y="20" width="34" height="16" fill="#bf8f3f"/><path d="M9 23L4 28L9 33M14 23L19 28L14 33" fill="none" stroke="#3a2f1a" stroke-width="1.8"/></svg>
<svg style="left:749px;top:1455px" width="30" height="28" viewBox="0 0 30 28"><circle cx="9.5" cy="16.5" r="8.5" fill="#6fb3e0"/><circle cx="9.5" cy="16.5" r="4" fill="none" stroke="#3d5566" stroke-width="1.5"/><path d="M21 27V7" stroke="#e0584a" stroke-width="2.5"/><path d="M15.5 8L21 1L26.5 8Z" fill="#e0584a"/></svg>
<svg style="left:1220px;top:690px" width="162" height="6" viewBox="0 0 162 6"><polyline points="0.0,0 4.0,4 8.0,0 12.0,4 16.0,0 20.0,4 24.0,0 28.0,4 32.0,0 36.0,4 40.0,0 44.0,4 48.0,0 52.0,4 56.0,0 60.0,4 64.0,0 68.0,4 72.0,0 76.0,4 80.0,0 84.0,4 88.0,0 92.0,4 96.0,0 100.0,4 104.0,0 108.0,4 112.0,0 116.0,4 120.0,0 124.0,4 128.0,0 132.0,4 136.0,0 140.0,4 144.0,0 148.0,4 152.0,0 156.0,4 160.0,0" fill="none" stroke="#5d9c6a" stroke-width="1.5" transform="translate(0,1)"/></svg>
<svg style="left:1472px;top:942px" width="144" height="6" viewBox="0 0 144 6"><polyline points="0.0,0 4.0,4 8.0,0 12.0,4 16.0,0 20.0,4 24.0,0 28.0,4 32.0,0 36.0,4 40.0,0 44.0,4 48.0,0 52.0,4 56.0,0 60.0,4 64.0,0 68.0,4 72.0,0 76.0,4 80.0,0 84.0,4 88.0,0 92.0,4 96.0,0 100.0,4 104.0,0 108.0,4 112.0,0 116.0,4 120.0,0 124.0,4 128.0,0 132.0,4 136.0,0 140.0,4 144.0,0" fill="none" stroke="#5d9c6a" stroke-width="1.5" transform="translate(0,1)"/></svg>
<div class="a" style="left:0;top:1491px;width:2630px;height:1px;background:#515456"></div>
<div class="a" style="left:0;top:1492px;width:2630px;height:42px;background:#3c3f41"></div>
<svg style="left:10px;top:1500px" width="28" height="28" viewBox="0 0 28 28"><rect x="1" y="1" width="26" height="24" fill="#555" stroke="#8a8a8a" stroke-width="2"/><path d="M6 1V25M22 1V25M1 27H27" stroke="#8a8a8a" stroke-width="2"/></svg>
<div class="t" style="left:2002px;top:1503px;font-size:24px">57:4</div>
<div class="t" style="left:2071px;top:1503px;font-size:24px;transform:scaleX(0.85);transform-origin:0 0">LF</div>
<div class="t" style="left:2129px;top:1503px;font-size:24px">UTF-8</div>
<div class="t" style="left:2225px;top:1503px;font-size:24px;color:#a4a4a4">Context: &lt;no context&gt;</div>
<svg style="left:2096px;top:1506px" width="11" height="17" viewBox="0 0 11 17"><path d="M0 7L5.5 0L11 7ZM0 10L5.5 17L11 10Z" fill="#a8a8a8"/></svg>
<svg style="left:2197px;top:1506px" width="11" height="17" viewBox="0 0 11 17"><path d="M0 7L5.5 0L11 7ZM0 10L5.5 17L11 10Z" fill="#a8a8a8"/></svg>
<svg style="left:2502px;top:1505px" width="20" height="20" viewBox="0 0 20 20"><path d="M2 9V5A4 4 0 0 1 10 5V6" fill="none" stroke="#8f8f8f" stroke-width="2"/><rect x="5" y="9" width="15" height="11" rx="2" fill="#8f8f8f"/><path d="M10 12H15M12.5 12V17" stroke="#3c3f41" stroke-width="1.6"/></svg>
<svg style="left:2549px;top:1500px" width="27" height="28" viewBox="0 0 27 28"><path d="M6 9V3Q6 1 8 1H19Q21 1 21 3V9Z" fill="none" stroke="#8f8f8f" stroke-width="2"/><circle cx="13.5" cy="5" r="1.6" fill="#8f8f8f"/><path d="M1 10H26" stroke="#8f8f8f" stroke-width="2"/><path d="M6 11V17Q6 23 13.5 23Q21 23 21 17V11" fill="none" stroke="#8f8f8f" stroke-width="2"/><path d="M9 19Q13.5 15 18 19" fill="none" stroke="#8f8f8f" stroke-width="2"/><path d="M8 27L13.5 24L19 27" fill="none" stroke="#8f8f8f" stroke-width="2"/></svg>
<svg style="left:2590px;top:1500px" width="32" height="28" viewBox="0 0 32 28"><path d="M16 2C8 2 2 7 2 13C2 19 8 24 16 24C18 24 20 23.6 22 23L29 27L27 21C29 19 30 16 30 13C30 7 24 2 16 2Z" fill="none" stroke="#8f8f8f" stroke-width="2"/></svg>
</body></html>
